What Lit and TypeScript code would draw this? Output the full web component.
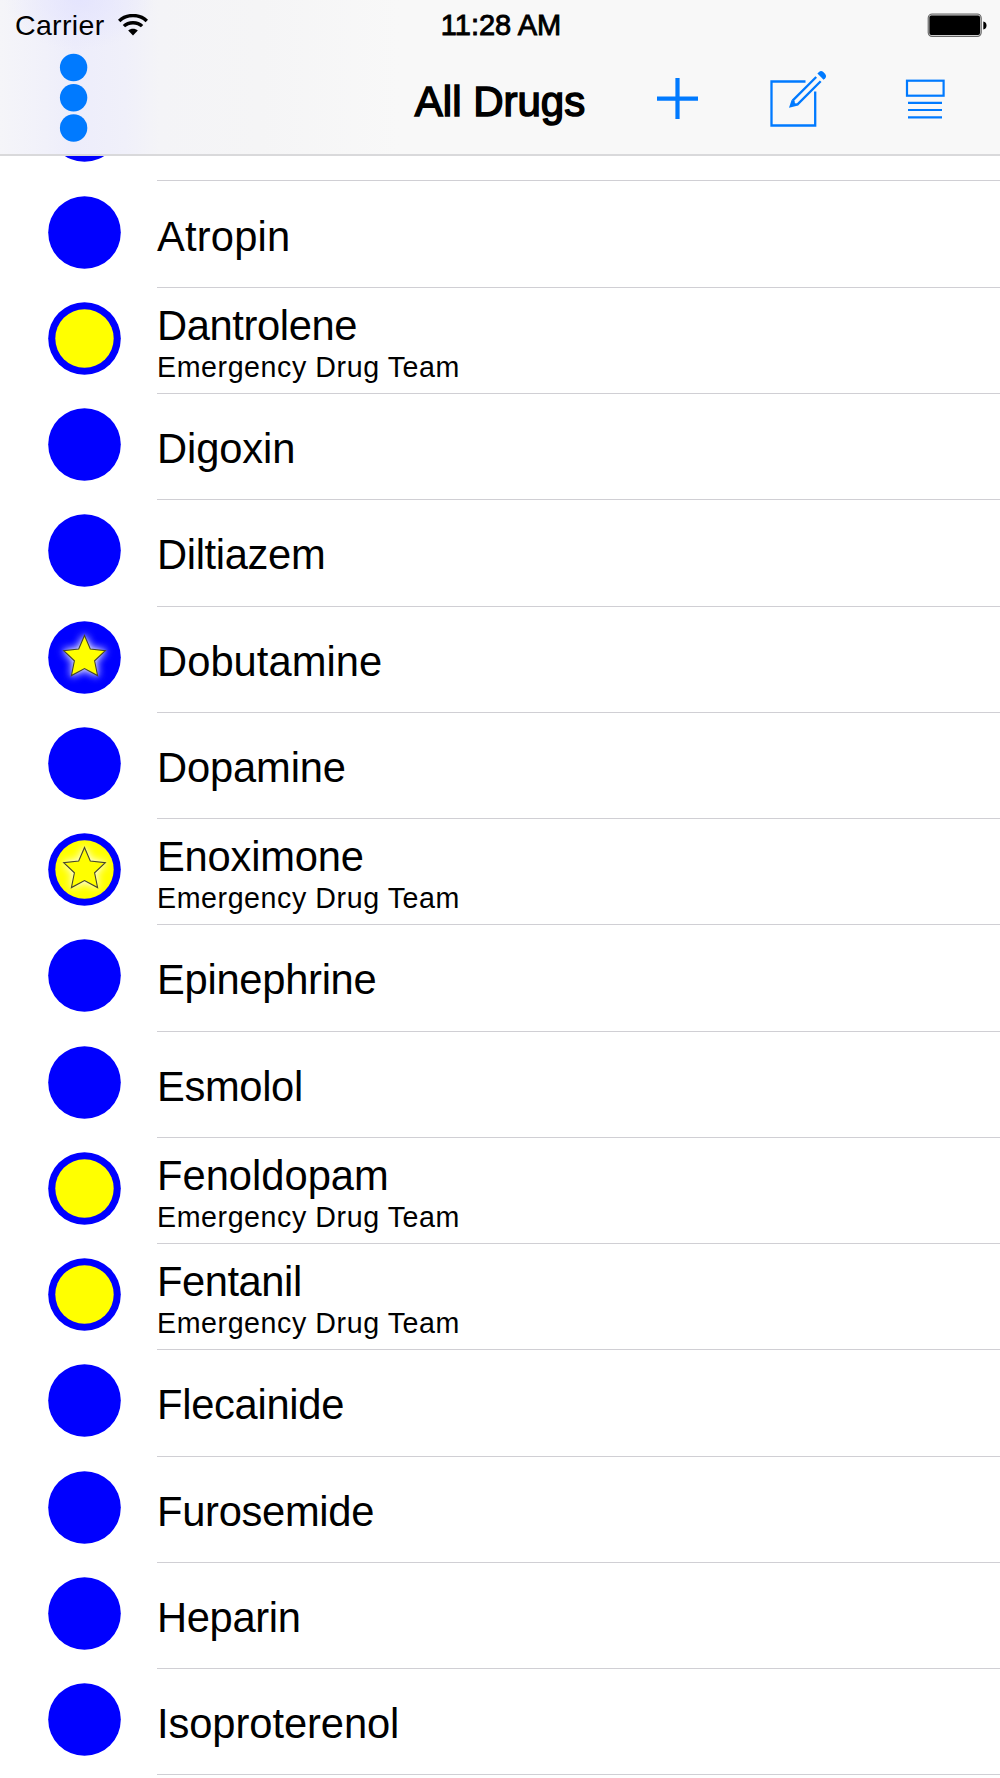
import { LitElement, html, svg, css, nothing } from "lit";
import { customElement, property } from "lit/decorators.js";

interface Drug {
  name: string;
  spacing: number;
  team?: boolean;
  star?: boolean;
}

const DRUGS: Drug[] = [
  { name: "Atropin", spacing: 0.19 },
  { name: "Dantrolene", spacing: -0.38, team: true },
  { name: "Digoxin", spacing: -0.1 },
  { name: "Diltiazem", spacing: -0.35 },
  { name: "Dobutamine", spacing: 0.05, star: true },
  { name: "Dopamine", spacing: -0.15 },
  { name: "Enoximone", spacing: -0.2, team: true, star: true },
  { name: "Epinephrine", spacing: -0.28 },
  { name: "Esmolol", spacing: -0.35 },
  { name: "Fenoldopam", spacing: 0, team: true },
  { name: "Fentanil", spacing: -0.45, team: true },
  { name: "Flecainide", spacing: -0.3 },
  { name: "Furosemide", spacing: -0.3 },
  { name: "Heparin", spacing: -0.35 },
  { name: "Isoproterenol", spacing: -0.08 },
];

@customElement("drug-badge")
class DrugBadge extends LitElement {
  @property({ type: Boolean }) team = false;
  @property({ type: Boolean }) star = false;

  static styles = css`
    :host { display: block; width: 73px; height: 73px; }
    .badge { display: block; }
    .glow { filter: drop-shadow(0 0 4px rgba(255, 255, 255, 0.9)) drop-shadow(0 0 1.5px rgba(255, 255, 255, 0.4)); }
  `;

  render() {
    return html`<svg class="badge" width="73" height="73" viewBox="0 0 73 73">
      <circle cx="36.5" cy="36.5" r="36.3" fill="#00f" />
      ${this.team ? svg`<circle cx="36.5" cy="36.5" r="29.2" fill="#ff0" />` : nothing}
      ${this.star
        ? svg`<path class="glow" fill="#ff0" stroke="#44442c" stroke-width="1.1"
            d="M36.5 14.5 L42.3 28 L57.3 29.6 L46.6 39.8 L49.6 54.6 L36.5 47.6 L23.4 54.6 L26.4 39.8 L15.7 29.6 L30.7 28 Z" />`
        : nothing}
    </svg>`;
  }
}

@customElement("drug-row")
class DrugRow extends LitElement {
  @property({ attribute: false }) drug!: Drug;

  static styles = css`
    :host { display: grid; grid-template-columns: 109px 1fr; height: 106.25px; padding-left: 48px; box-sizing: border-box; }
    drug-badge { margin-top: 14px; }
    .body { display: flex; flex-direction: column; border-bottom: 1px solid #d0cfd4; box-sizing: border-box; }
    .name { font-size: 41.7px; line-height: 48px; padding-top: 31px; white-space: nowrap; }
    .team .name { padding-top: 14px; }
    .sub { font-size: 28.6px; line-height: 34px; letter-spacing: 0.58px; white-space: nowrap; }
  `;

  render() {
    const d = this.drug;
    return html`<drug-badge ?team=${d.team} ?star=${d.star}></drug-badge>
      <div class="body ${d.team ? "team" : ""}">
        <div class="name" style="letter-spacing:${d.spacing}px">${d.name}</div>
        ${d.team ? html`<div class="sub">Emergency Drug Team</div>` : nothing}
      </div>`;
  }
}

@customElement("app-root")
class AppRoot extends LitElement {
  static styles = css`
    :host {
      display: block; width: 1000px; height: 1778px; overflow: hidden; background: #fff; color: #000;
      font-family: "Liberation Sans", Arial, sans-serif;
    }
    .header {
      height: 156px; box-sizing: border-box; border-bottom: 2px solid #d9d9db;
      background:
        radial-gradient(ellipse 75px 50px at 80px 0, rgba(225, 225, 255, 0.7), rgba(225, 225, 255, 0)),
        linear-gradient(90deg, #f5f5f9 0, #f1f1fa 45px, #ededfb 75px, #f0f0fa 125px, #f4f4f7 160px, #f5f5f6 260px, #f8f8f8 400px);
    }
    .status { display: grid; grid-template-columns: 1fr auto 1fr; align-items: center; height: 50px; padding: 0 13px 0 15px; }
    .carrier { display: flex; align-items: center; gap: 13.5px; font-size: 28.5px; letter-spacing: 0.34px; }
    .time { font-size: 29px; -webkit-text-stroke: 0.9px #000; }
    .battery { justify-self: end; }
    .nav { display: grid; grid-template-columns: 1fr auto 1fr; align-items: center; height: 104px; }
    .title { font-size: 42px; -webkit-text-stroke: 1.5px #000; white-space: nowrap; }
    .dots { margin: 0 0 8.4px 59px; }
    .actions { display: flex; justify-content: flex-end; }
    svg { display: block; }
    .peek { height: 25.5px; padding: 0 0 0.5px 48px; display: grid; grid-template-columns: 109px 1fr; overflow: hidden; box-sizing: border-box; align-items: end; }
    .line { height: 1px; background: #d0cfd4; }
  `;

  render() {
    return html`
      <header class="header">
        <div class="status">
          <div class="carrier">
            <span>Carrier</span>
            <svg width="30" height="23" viewBox="0 0 30 23">
              <path d="M1.2 7 C8.5-.3 21.5-.3 28.8 7" fill="none" stroke="#000" stroke-width="3.4" />
              <path d="M5.9 12.2 C10.5 7.6 19.5 7.6 24.1 12.2" fill="none" stroke="#000" stroke-width="3.3" />
              <path d="M10.2 16.5 C12.7 14 17.3 14 19.8 16.5 L15 21.4 Z" />
            </svg>
          </div>
          <div class="time">11:28 AM</div>
          <svg class="battery" width="60" height="25" viewBox="0 0 60 25">
            <rect x="1.2" y="1" width="53" height="22.5" rx="4" fill="#ccc" stroke="#666" stroke-width="1.1" />
            <rect x="2.4" y="2.6" width="50.6" height="19.4" rx="2" />
            <path d="M56.3 8.5 Q59.5 9 59.5 12.5 T56.3 16.5 Z" />
          </svg>
        </div>
        <div class="nav">
          <svg class="dots" width="30" height="90" viewBox="0 0 30 90" fill="#007aff">
            <circle cx="14.6" cy="14.5" r="13.7" /><circle cx="14.6" cy="44.7" r="13.7" /><circle cx="14.6" cy="75" r="13.7" />
          </svg>
          <div class="title">All Drugs</div>
          <div class="actions">
            <svg width="343" height="104" viewBox="657 50 343 104" fill="none" stroke="#007aff">
              <path d="M677.5 78v41M657 98.7h41" stroke-width="4.2" />
              <path d="M805.5 81.5H771.5V125.5H815.2V91.5" stroke-width="2.3" />
              <path d="M816.2 77 L792.6 100.6 M820.7 81.2 L797.3 104.6" stroke-width="2.3" />
              <path d="M791.6 100 L794.6 100.8 L794.9 103.2 L797.3 103.6 L798.2 105.6 L789 107.8 Z" fill="#007aff" stroke="none" />
              <path d="M817.4 73.6 L819 72 Q821 70.2 823.3 72 L825 73.7 Q827 76 825.2 78.2 L823.6 79.8 Z" fill="#007aff" stroke="none" />
              <rect x="907" y="80.7" width="36.6" height="15" stroke-width="2.2" />
              <path d="M908 102.8h34M908 110h34M908 117.3h34" stroke-width="2.2" />
            </svg>
          </div>
        </div>
      </header>
      <div class="peek">
        <svg width="73" height="25" viewBox="0 0 73 25"><circle cx="36.5" cy="-30.5" r="36.3" fill="#00f" /></svg>
        <div class="line"></div>
      </div>
      <main>${DRUGS.map((d) => html`<drug-row .drug=${d}></drug-row>`)}</main>
    `;
  }
}
